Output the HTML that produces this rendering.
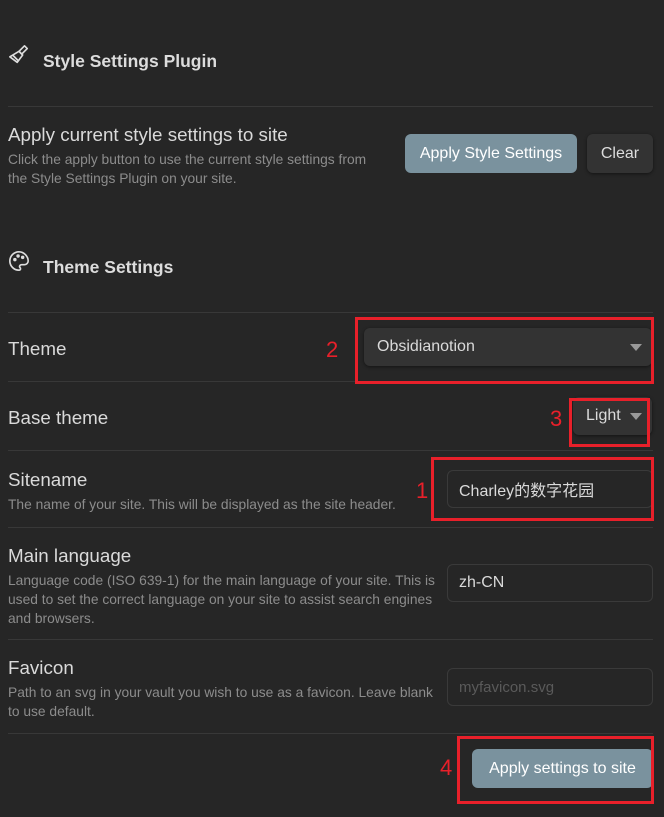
<!DOCTYPE html><html><head><meta charset="utf-8"><style>
body{margin:0;width:664px;height:817px;background:#262626;font-family:"Liberation Sans","Noto Sans CJK SC",sans-serif;color:#dadada;position:relative;overflow:hidden}
.a{position:absolute}
.hr{position:absolute;left:8px;right:11px;height:1px;background:#383838}
.h{font-size:17.5px;font-weight:bold;color:#dcdcdc}
.l{font-size:18.8px;color:#dadada}
.d{font-size:13.8px;color:#8c8c8c;line-height:19px}
.inp{position:absolute;background:#262626;border:1px solid #3a3a3a;border-radius:6px;box-sizing:border-box;font-size:16px;padding-left:11px;display:flex;align-items:center}
.sel{position:absolute;background:#333;border-radius:6px;box-shadow:0 1px 3px rgba(0,0,0,.5);font-size:16px;display:flex;align-items:center;padding-left:13px;box-sizing:border-box}
.tri{position:absolute;right:10px;top:16px;width:0;height:0;border-left:6px solid transparent;border-right:6px solid transparent;border-top:7px solid #999}
.btn{position:absolute;border-radius:6px;display:flex;align-items:center;justify-content:center;font-size:16px;box-sizing:border-box}
.red{position:absolute;border:3px solid #e8202a;box-sizing:border-box}
.n{position:absolute;color:#e8202a;font-size:22px}
</style></head><body>
<svg class="a" style="left:8px;top:44px" width="22" height="22" viewBox="0 0 24 24" fill="none" stroke="#ddd" stroke-width="1.8" stroke-linejoin="round"><path d="M18 2l3 3-6 6-3-3z"/><path d="M12 8l4 4-6 8-8-6z"/><path d="M5 12l6 6"/></svg>
<div class="a h" style="left:43px;top:51px">Style Settings Plugin</div>
<div class="hr" style="top:106px"></div>
<div class="a l" style="left:8px;top:124px">Apply current style settings to site</div>
<div class="a d" style="left:8px;top:150px">Click the apply button to use the current style settings from<br>the Style Settings Plugin on your site.</div>
<div class="btn" style="left:405px;top:134px;width:172px;height:39px;background:#7a929e;color:#fff">Apply Style Settings</div>
<div class="btn" style="left:587px;top:134px;width:66px;height:39px;background:#333;color:#ddd;box-shadow:0 1px 3px rgba(0,0,0,.5)">Clear</div>
<svg class="a" style="left:8px;top:250px" width="22" height="22" viewBox="0 0 24 24" fill="none" stroke="#ddd" stroke-width="1.8"><path d="M12 2a10 10 0 0 0 0 20c2 0 2-2 1-3s0-3 2-3h3a4 4 0 0 0 4-4c0-5-4.5-10-10-10z"/><circle cx="7.5" cy="10.5" r="1" fill="#ddd"/><circle cx="11" cy="6.5" r="1" fill="#ddd"/><circle cx="16" cy="8" r="1" fill="#ddd"/></svg>
<div class="a h" style="left:43px;top:257px">Theme Settings</div>
<div class="hr" style="top:312px"></div>
<div class="a l" style="left:8px;top:338px">Theme</div>
<div class="sel" style="left:364px;top:328px;width:288px;height:38px">Obsidianotion<div class="tri"></div></div>
<div class="hr" style="top:381px"></div>
<div class="a l" style="left:8px;top:407px">Base theme</div>
<div class="sel" style="left:573px;top:397px;width:79px;height:38px">Light<div class="tri"></div></div>
<div class="hr" style="top:450px"></div>
<div class="a l" style="left:8px;top:469px">Sitename</div>
<div class="a d" style="left:8px;top:495px">The name of your site. This will be displayed as the site header.</div>
<div class="inp" style="left:447px;top:470px;width:206px;height:38px">Charley的数字花园</div>
<div class="hr" style="top:527px"></div>
<div class="a l" style="left:8px;top:545px">Main language</div>
<div class="a d" style="left:8px;top:571px">Language code (ISO 639-1) for the main language of your site. This is<br>used to set the correct language on your site to assist search engines<br>and browsers.</div>
<div class="inp" style="left:447px;top:564px;width:206px;height:38px">zh-CN</div>
<div class="hr" style="top:639px"></div>
<div class="a l" style="left:8px;top:657px">Favicon</div>
<div class="a d" style="left:8px;top:683px">Path to an svg in your vault you wish to use as a favicon. Leave blank<br>to use default.</div>
<div class="inp" style="left:447px;top:668px;width:206px;height:38px;color:#5a5a5a;font-size:15px">myfavicon.svg</div>
<div class="hr" style="top:733px"></div>
<div class="btn" style="left:472px;top:749px;width:181px;height:39px;background:#7a929e;color:#fff">Apply settings to site</div>
<div class="red" style="left:355px;top:317px;width:299px;height:67px"></div>
<div class="red" style="left:569px;top:398px;width:81px;height:49px"></div>
<div class="red" style="left:431px;top:457px;width:223px;height:64px"></div>
<div class="red" style="left:457px;top:736px;width:197px;height:68px"></div>
<div class="n" style="left:326px;top:337px">2</div>
<div class="n" style="left:550px;top:406px">3</div>
<div class="n" style="left:416px;top:478px">1</div>
<div class="n" style="left:440px;top:755px">4</div>
</body></html>
